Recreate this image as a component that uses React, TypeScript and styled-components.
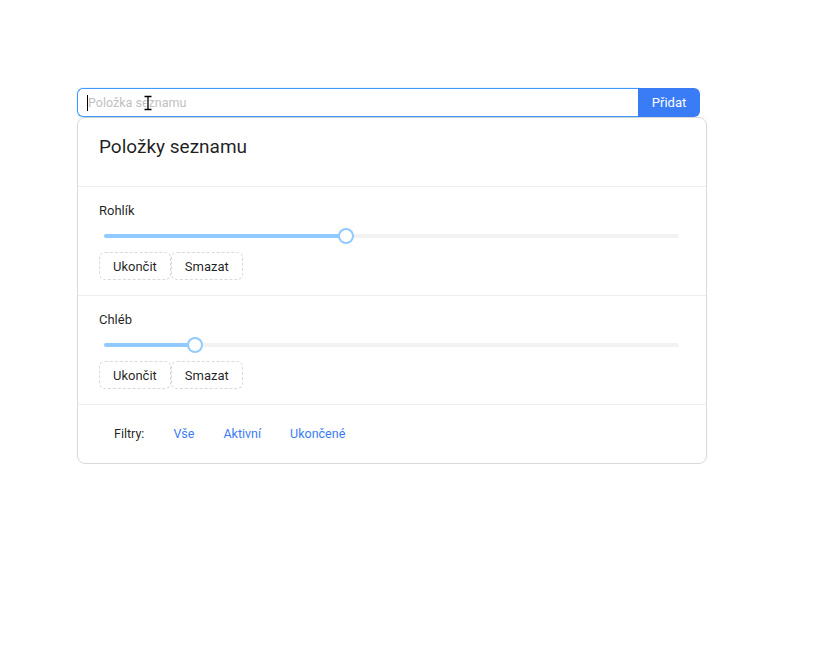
import React, { useState } from 'react';
import styled, { createGlobalStyle } from 'styled-components';

const GlobalStyle = createGlobalStyle`
  html, body {
    margin: 0;
    padding: 0;
    background: #ffffff;
  }
  body {
    font-family: Roboto, "Noto Sans", "Liberation Sans", sans-serif;
    color: rgba(0, 0, 0, 0.88);
    -webkit-font-smoothing: antialiased;
  }
  * { box-sizing: border-box; }
`;

const colors = {
    primary: '#3a7cf6',
    track: '#91caff',
    rail: '#f2f2f2',
    border: '#d9d9d9',
    divider: '#eeeeee',
    text: 'rgba(0, 0, 0, 0.88)',
    placeholder: '#bfbfbf',
};

type Item = { id: number; name: string; progress: number };

const items: Item[] = [
    { id: 1, name: 'Rohlík', progress: 42.1 },
    { id: 2, name: 'Chléb', progress: 15.8 },
];

export default function App() {
    const [value, setValue] = useState('');

    return (
        <>
            <GlobalStyle />
            <Page>
                <InputRow>
                    <InputWrap>
                        <TextInput
                            placeholder="Položka seznamu"
                            value={value}
                            onChange={(e) => setValue(e.target.value)}
                        />
                        {/* textový kurzor + kurzor myši přes pole */}
                        <Caret />
                        <MouseCursor width="10" height="16" viewBox="0 0 10 16">
                            <path
                                d="M1.5 1.5h7M1.5 14.5h7M5 1.5v13"
                                stroke="#ffffff"
                                strokeWidth="3.2"
                                fill="none"
                            />
                            <path
                                d="M1.5 1.5h7M1.5 14.5h7M5 1.5v13"
                                stroke="#000000"
                                strokeWidth="1.3"
                                fill="none"
                            />
                        </MouseCursor>
                    </InputWrap>
                    <AddButton>Přidat</AddButton>
                </InputRow>

                <Card>
                    <CardHeader>Položky seznamu</CardHeader>
                    {items.map((item) => (
                        <ItemRow key={item.id}>
                            <ItemName>{item.name}</ItemName>
                            <SliderBox>
                                <Rail>
                                    <Track style={{ width: `${item.progress}%` }} />
                                    <Handle style={{ left: `${item.progress}%` }} />
                                </Rail>
                            </SliderBox>
                            <Actions>
                                <DashedButton>Ukončit</DashedButton>
                                <DashedButton>Smazat</DashedButton>
                            </Actions>
                        </ItemRow>
                    ))}
                    <Footer>
                        <FilterLabel>Filtry:</FilterLabel>
                        <FilterLink>Vše</FilterLink>
                        <FilterLink>Aktivní</FilterLink>
                        <FilterLink>Ukončené</FilterLink>
                    </Footer>
                </Card>
            </Page>
        </>
    );
}

const Page = styled.div`
    width: 630px;
    margin: 0 0 0 77px;
    padding-top: 88px;
`

const InputRow = styled.div`
    display: flex;
    width: 623px;
    height: 29px;
`

const InputWrap = styled.div`
    position: relative;
    flex: 1;
    display: flex;
`

const TextInput = styled.input`
    flex: 1;
    height: 29px;
    padding: 0 10px;
    font-family: Roboto, "Noto Sans", "Liberation Sans", sans-serif;
    font-size: 12.5px;
    color: ${colors.text};
    border: 1px solid #4096ff;
    border-right: none;
    border-radius: 6px 0 0 6px;
    outline: none;
    box-shadow: 0 0 0 1px rgba(5, 145, 255, 0.08);
    caret-color: transparent;

    &::placeholder {
        color: ${colors.placeholder};
    }
`

const Caret = styled.span`
    position: absolute;
    left: 10px;
    top: 7px;
    width: 1px;
    height: 16px;
    background: #000000;
    pointer-events: none;
`

const MouseCursor = styled.svg`
    position: absolute;
    left: 66px;
    top: 7px;
    pointer-events: none;
`

const AddButton = styled.button`
    width: 62px;
    height: 29px;
    border: none;
    border-radius: 0 6px 6px 0;
    background: ${colors.primary};
    color: #ffffff;
    font-family: Roboto, "Noto Sans", "Liberation Sans", sans-serif;
    font-size: 13px;
    padding: 0;
    cursor: pointer;
`

const Card = styled.div`
    border: 1px solid ${colors.border};
    border-radius: 8px;
    background: #ffffff;
`

const CardHeader = styled.div`
    padding: 17px 21px 27px;
    font-size: 19px;
    line-height: 24px;
    font-weight: 400;
    color: ${colors.text};
    border-bottom: 1px solid ${colors.divider};
`

const ItemRow = styled.div`
    padding: 14px 21px 15px;
    border-bottom: 1px solid ${colors.divider};
`

const ItemName = styled.div`
    font-size: 13px;
    line-height: 20px;
`

const SliderBox = styled.div`
    height: 28px;
    margin-top: 1px;
    display: flex;
    align-items: center;
    padding: 0 6px 0 5px;
`

const Rail = styled.div`
    position: relative;
    flex: 1;
    height: 4px;
    border-radius: 2px;
    background: ${colors.rail};
`

const Track = styled.div`
    height: 100%;
    border-radius: 2px;
    background: ${colors.track};
`

const Handle = styled.div`
    position: absolute;
    top: 50%;
    width: 12px;
    height: 12px;
    margin: -6px 0 0 -6px;
    border-radius: 50%;
    background: #ffffff;
    box-shadow: 0 0 0 2px ${colors.track};
`

const Actions = styled.div`
    display: flex;
    margin-top: 2px;
`

const DashedButton = styled.button`
    height: 28px;
    padding: 0 13px;
    background: #ffffff;
    border: 1px dashed ${colors.border};
    border-radius: 6px;
    font-family: Roboto, "Noto Sans", "Liberation Sans", sans-serif;
    font-size: 13px;
    color: ${colors.text};
    cursor: pointer;
`

const Footer = styled.div`
    display: flex;
    align-items: center;
    height: 58px;
    padding: 0 21px 2px;
    font-size: 12.5px;
`

const FilterLabel = styled.span`
    padding: 0 14.5px 0 15px;
    color: ${colors.text};
`

const FilterLink = styled.a`
    padding: 0 14.5px;
    color: ${colors.primary};
    cursor: pointer;
`
